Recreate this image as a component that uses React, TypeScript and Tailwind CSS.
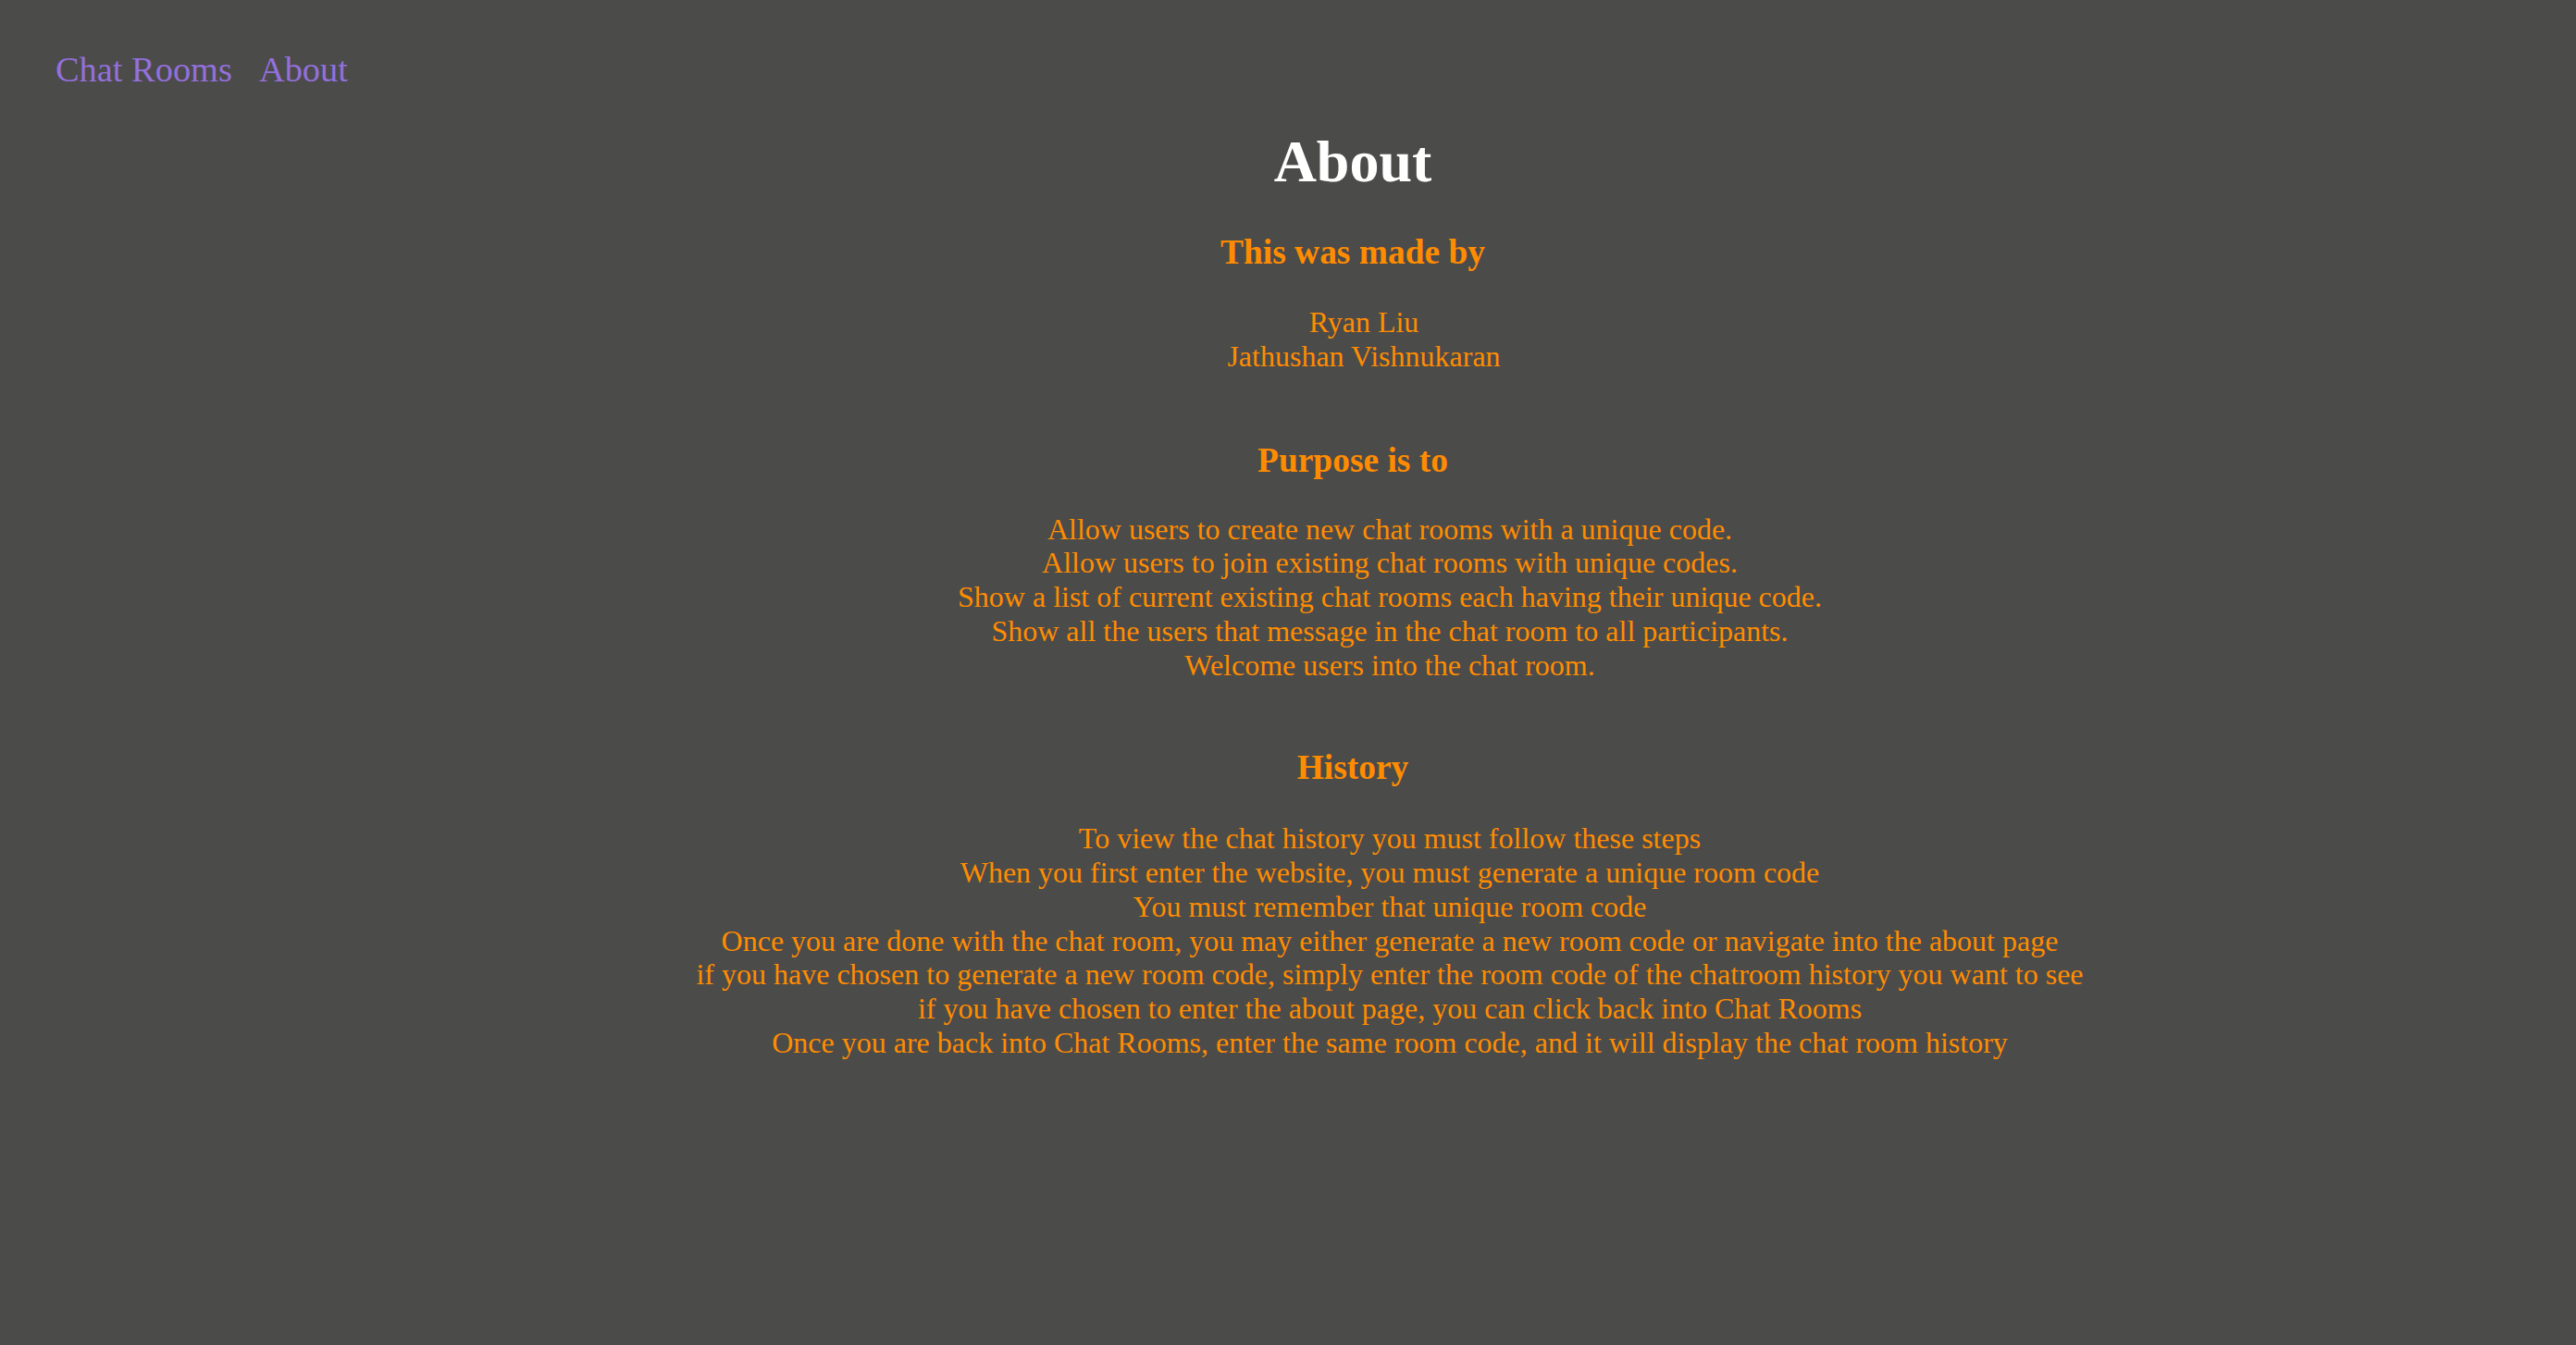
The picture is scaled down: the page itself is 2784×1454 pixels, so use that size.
import React from "react";

const purposes = [
  "Allow users to create new chat rooms with a unique code.",
  "Allow users to join existing chat rooms with unique codes.",
  "Show a list of current existing chat rooms each having their unique code.",
  "Show all the users that message in the chat room to all participants.",
  "Welcome users into the chat room.",
];

const history = [
  "To view the chat history you must follow these steps",
  "When you first enter the website, you must generate a unique room code",
  "You must remember that unique room code",
  "Once you are done with the chat room, you may either generate a new room code or navigate into the about page",
  "if you have chosen to generate a new room code, simply enter the room code of the chatroom history you want to see",
  "if you have chosen to enter the about page, you can click back into Chat Rooms",
  "Once you are back into Chat Rooms, enter the same room code, and it will display the chat room history",
];

export default function App() {
  return (
    <div
      className="min-h-screen w-full bg-[#4b4b4a]"
      style={{ fontFamily: '"Liberation Serif", "Times New Roman", serif' }}
    >
      <nav className="flex pl-[60px] pt-[53px] pb-[1px] text-[38.4px] leading-[44px] text-[#9370db]">
        <a className="cursor-pointer">Chat Rooms</a>
        <a className="ml-[29px] cursor-pointer">About</a>
      </nav>
      <main className="pl-[140px] text-center">
        <h1 className="mt-[40px] text-[64px] font-bold leading-[74px] text-white">About</h1>
        <h3 className="mt-[39px] text-[37.44px] font-bold leading-[43px] text-[#ff8c00]">
          This was made by
        </h3>
        <div className="mt-[36px] pl-[24px] text-[32px] leading-[36.75px] text-[#ff8c00]">
          <div>Ryan Liu</div>
          <div>Jathushan Vishnukaran</div>
        </div>
        <h3 className="mt-[72px] text-[37.44px] font-bold leading-[43px] text-[#ff8c00]">
          Purpose is to
        </h3>
        <ul className="mt-[35px] pl-[80px] text-[32px] leading-[36.75px] text-[#ff8c00]">
          {purposes.map((p) => (
            <li key={p}>{p}</li>
          ))}
        </ul>
        <h3 className="mt-[71px] text-[37.44px] font-bold leading-[43px] text-[#ff8c00]">
          History
        </h3>
        <ul className="mt-[37px] pl-[80px] text-[32px] leading-[36.75px] text-[#ff8c00]">
          {history.map((p) => (
            <li key={p}>{p}</li>
          ))}
        </ul>
      </main>
    </div>
  );
}
